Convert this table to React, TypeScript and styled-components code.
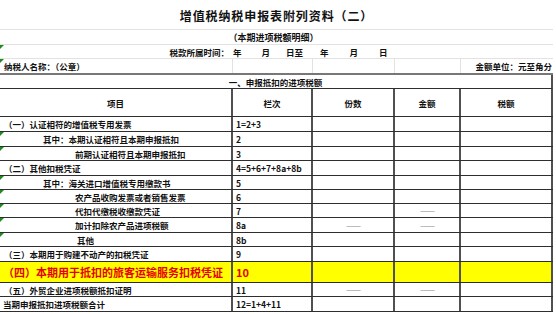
import React from "react"
import styled, { createGlobalStyle, css } from "styled-components"

const GlobalStyle = createGlobalStyle`
  html, body {
    margin: 0;
    padding: 0;
    background: #fff;
  }
  body {
    font-family: "Noto Sans CJK SC", "Noto Sans", sans-serif;
    color: #111;
  }
`

const COLS = "233px 80px 82px 66px 92px"
const GRID_LIGHT = "#e2e2e2"
const LINE_V = "#505050"
const LINE_H = "#2e2e2e"

const Sheet = styled.div`
  width: 556px;
  height: 314px;
  overflow: hidden;
`

const marked = css`
  position: relative;
  &::before {
    content: "";
    position: absolute;
    left: 0;
    top: 0;
    border-top: 4px solid #1f8a1f;
    border-right: 4px solid transparent;
  }
`

const TitleBar = styled.div`
  height: 30px;
  box-sizing: border-box;
  width: 553px;
  border-bottom: 1px solid ${GRID_LIGHT};
  display: flex;
  align-items: center;
  justify-content: center;
  padding-top: 2px;
  font-size: 12px;
  font-weight: 700;
  letter-spacing: 0.9px;
`

const SubTitle = styled.div`
  height: 15px;
  box-sizing: border-box;
  width: 553px;
  border-bottom: 1px solid ${GRID_LIGHT};
  display: flex;
  align-items: center;
  justify-content: center;
  padding-right: 6px;
  font-size: 9px;
  font-weight: 700;
`

const InfoRow = styled.div<{ $mark?: boolean }>`
  height: 14px;
  box-sizing: border-box;
  width: 553px;
  border-bottom: 1px solid ${GRID_LIGHT};
  display: flex;
  align-items: center;
  font-size: 8.5px;
  font-weight: 700;
  ${(p) => p.$mark && marked}
`

const PeriodLabel = styled.span`
  width: 229px;
  text-align: right;
`

const PeriodPart = styled.span<{ $left: number }>`
  margin-left: ${(p) => p.$left}px;
`

const PayerRow = styled.div`
  ${marked};
  display: grid;
  grid-template-columns: ${COLS};
  height: 14px;
  font-size: 8.5px;
  font-weight: 700;
`

const PayerCell = styled.div<{ $right?: boolean }>`
  box-sizing: border-box;
  display: flex;
  align-items: center;
  justify-content: ${(p) => (p.$right ? "flex-end" : "flex-start")};
  padding: 0 1px 0 4px;
  border-right: 1px solid ${GRID_LIGHT};
  white-space: nowrap;
  &:last-child {
    border-right: none;
  }
`

const Table = styled.div`
  width: 553px;
  border-top: 2px solid #777;
`

const SectionRow = styled.div`
  height: 14px;
  box-sizing: border-box;
  border-right: 2px solid ${LINE_V};
  border-bottom: 1px solid ${LINE_H};
  display: flex;
  align-items: center;
  justify-content: center;
  font-size: 8.5px;
  font-weight: 700;
`

const Row = styled.div<{ $h: number; $mark?: boolean; $hl?: boolean }>`
  display: grid;
  grid-template-columns: ${COLS};
  height: ${(p) => p.$h}px;
  box-sizing: border-box;
  border-bottom: 1px solid ${LINE_H};
  background: ${(p) => (p.$hl ? "#ffff00" : "transparent")};
  font-size: ${(p) => (p.$hl ? "11px" : "8.5px")};
  font-weight: 700;
  color: ${(p) => (p.$hl ? "#e60000" : "#111")};
  ${(p) => p.$mark && marked}
`

const Cell = styled.div<{ $center?: boolean; $indent?: number }>`
  box-sizing: border-box;
  display: flex;
  align-items: center;
  justify-content: ${(p) => (p.$center ? "center" : "flex-start")};
  padding-left: ${(p) => (p.$center ? 0 : p.$indent ?? 3)}px;
  border-right: 2px solid ${LINE_V};
  white-space: nowrap;
  overflow: hidden;
`

const Dash = styled.span`
  color: #8a8a8a;
  font-size: 9px;
  font-weight: 400;
  letter-spacing: -1px;
`

type Line = {
  label: string
  no: string
  indent: number
  h: number
  mark?: boolean
  hl?: boolean
  dashCount?: boolean
  dashAmount?: boolean
}

const lines: Line[] = [
  { label: "（一）认证相符的增值税专用发票", no: "1=2+3", indent: 4, h: 15 },
  { label: "其中：本期认证相符且本期申报抵扣", no: "2", indent: 43, h: 15, mark: true },
  { label: "前期认证相符且本期申报抵扣", no: "3", indent: 75, h: 14, mark: true },
  { label: "（二）其他扣税凭证", no: "4=5+6+7+8a+8b", indent: 4, h: 15 },
  { label: "其中：海关进口增值税专用缴款书", no: "5", indent: 43, h: 14, mark: true },
  { label: "农产品收购发票或者销售发票", no: "6", indent: 75, h: 14, mark: true },
  { label: "代扣代缴税收缴款凭证", no: "7", indent: 75, h: 14, mark: true, dashAmount: true },
  {
    label: "加计扣除农产品进项税额",
    no: "8a",
    indent: 75,
    h: 15,
    mark: true,
    dashCount: true,
    dashAmount: true,
  },
  { label: "其他", no: "8b", indent: 77, h: 14, mark: true },
  { label: "（三）本期用于购建不动产的扣税凭证", no: "9", indent: 4, h: 15 },
  { label: "（四）本期用于抵扣的旅客运输服务扣税凭证", no: "10", indent: 3, h: 21, hl: true },
  {
    label: "（五）外贸企业进项税额抵扣证明",
    no: "11",
    indent: 4,
    h: 14,
    dashCount: true,
    dashAmount: true,
  },
  { label: "当期申报抵扣进项税额合计", no: "12=1+4+11", indent: 3, h: 15 },
]

const App = () => (
  <Sheet>
    <GlobalStyle />
    <TitleBar>增值税纳税申报表附列资料（二）</TitleBar>
    <SubTitle>（本期进项税额明细）</SubTitle>
    <InfoRow $mark>
      <PeriodLabel>税款所属时间：</PeriodLabel>
      <PeriodPart $left={4}>年</PeriodPart>
      <PeriodPart $left={20}>月</PeriodPart>
      <PeriodPart $left={16}>日至</PeriodPart>
      <PeriodPart $left={17}>年</PeriodPart>
      <PeriodPart $left={21}>月</PeriodPart>
      <PeriodPart $left={21}>日</PeriodPart>
    </InfoRow>
    <PayerRow>
      <PayerCell>纳税人名称：（公章）</PayerCell>
      <PayerCell />
      <PayerCell />
      <PayerCell />
      <PayerCell $right>金额单位：元至角分</PayerCell>
    </PayerRow>
    <Table>
      <SectionRow>一、申报抵扣的进项税额</SectionRow>
      <Row $h={28}>
        <Cell $center>项目</Cell>
        <Cell $center>栏次</Cell>
        <Cell $center>份数</Cell>
        <Cell $center>金额</Cell>
        <Cell $center>税额</Cell>
      </Row>
      {lines.map((l) => (
        <Row key={l.no} $h={l.h} $mark={l.mark} $hl={l.hl}>
          <Cell $indent={l.indent}>{l.label}</Cell>
          <Cell $indent={3}>{l.no}</Cell>
          <Cell $center>{l.dashCount && <Dash>——</Dash>}</Cell>
          <Cell $center>{l.dashAmount && <Dash>——</Dash>}</Cell>
          <Cell $center />
        </Row>
      ))}
    </Table>
  </Sheet>
)

export default App
